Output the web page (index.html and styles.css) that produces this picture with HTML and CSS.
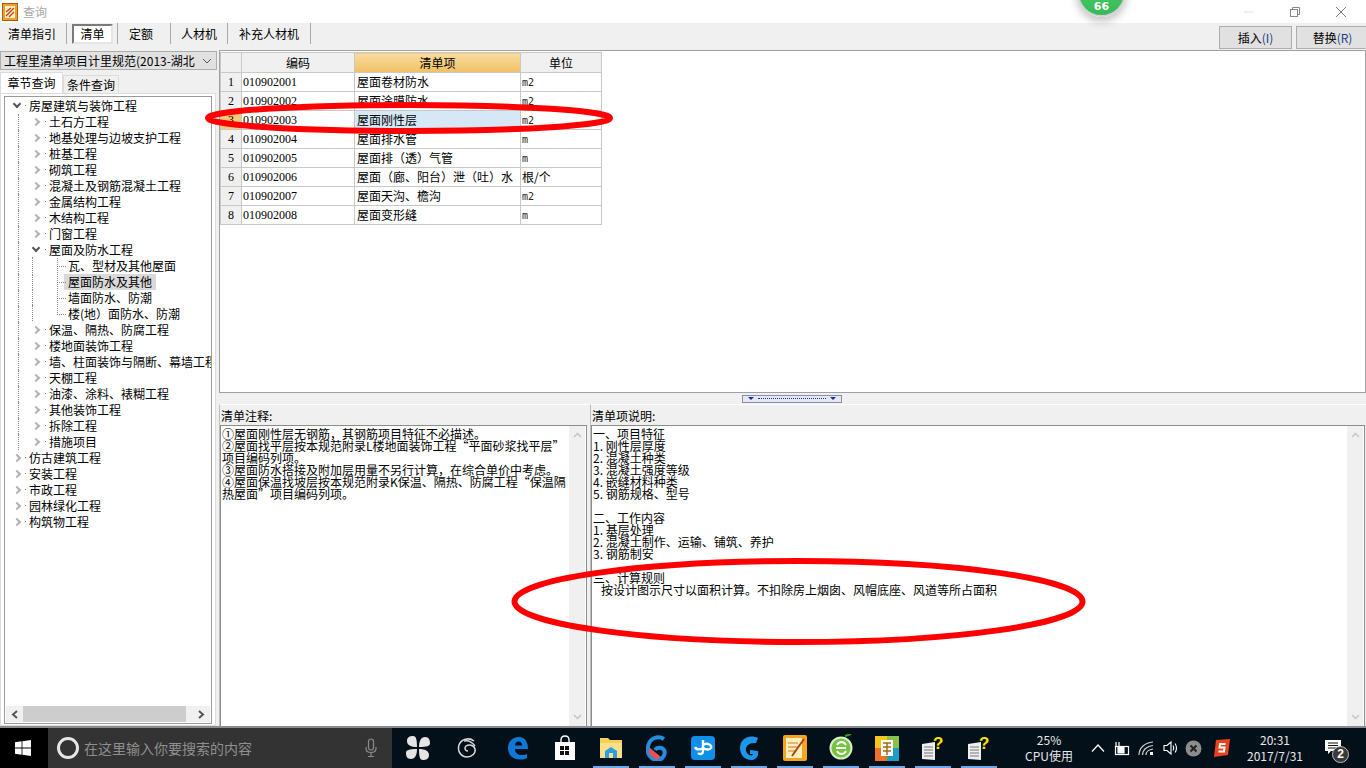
FILE: index.html
```html
<!DOCTYPE html>
<html lang="zh-CN">
<head>
    <meta charset="UTF-8">
    <title>查询</title>
    <link rel="stylesheet" href="styles.css">
</head>
<body>
    <div class="window">
        <div class="titlebar">
            <svg class="app-icon" width="16" height="18" viewBox="0 0 16 18">
                <rect x="0.5" y="0.5" width="15" height="17" fill="#f0a020" stroke="#b05a10"/>
                <rect x="3" y="3" width="10" height="12" fill="#fff3cf"/>
                <path d="M4 13 L12 5 M4 9 L9 5 M7 14 L12 9" stroke="#c8400f" stroke-width="1.4"/>
            </svg>
            <span class="title-text">查询</span>
            <div class="win-controls">
                <svg width="12" height="12" viewBox="0 0 12 12"><path d="M1 6H11" stroke="#e2e2e2"/></svg>
                <svg width="12" height="12" viewBox="0 0 12 12" fill="none" stroke="#888"><rect x="1.5" y="3.5" width="7" height="7"/><path d="M3.5 3.5V1.5H10.5V8.5H8.5"/></svg>
                <svg width="12" height="12" viewBox="0 0 12 12" fill="none" stroke="#777"><path d="M1 1L11 11M11 1L1 11"/></svg>
            </div>
        </div>

        <div class="toolbar">
            <div class="tabs">
                <div class="tab tab-guide">清单指引</div>
                <div class="tab tab-pressed"><span>清单</span></div>
                <div class="tab tab-quota">定额</div>
                <div class="tab tab-res">人材机</div>
                <div class="tab tab-extra">补充人材机</div>
            </div>
            <div class="actions">
                <button class="action">插入<em>(I)</em></button>
                <button class="action">替换<em>(R)</em></button>
            </div>
        </div>

        <div class="main">
            <div class="left-panel">
                <div class="select-box">
                    <span class="select-text">工程里清单项目计里规范(2013-湖北</span>
                    <svg width="10" height="6" viewBox="0 0 10 6" fill="none" stroke="#555"><path d="M1 1L5 5L9 1"/></svg>
                </div>
                <div class="sub-tabs">
                    <div class="sub-tab active">章节查询</div>
                    <div class="sub-tab">条件查询</div>
                </div>
                <div class="tree-box">
                    <div class="tree-frame">
                        <div class="tree">
                            <div class="row lv0 open"><i class="arrow"></i><span>房屋建筑与装饰工程</span></div>
                            <div class="row lv1"><i class="arrow"></i><span>土石方工程</span></div>
                            <div class="row lv1"><i class="arrow"></i><span>地基处理与边坡支护工程</span></div>
                            <div class="row lv1"><i class="arrow"></i><span>桩基工程</span></div>
                            <div class="row lv1"><i class="arrow"></i><span>砌筑工程</span></div>
                            <div class="row lv1"><i class="arrow"></i><span>混凝土及钢筋混凝土工程</span></div>
                            <div class="row lv1"><i class="arrow"></i><span>金属结构工程</span></div>
                            <div class="row lv1"><i class="arrow"></i><span>木结构工程</span></div>
                            <div class="row lv1"><i class="arrow"></i><span>门窗工程</span></div>
                            <div class="row lv1 open"><i class="arrow"></i><span>屋面及防水工程</span></div>
                            <div class="row lv2"><span>瓦、型材及其他屋面</span></div>
                            <div class="row lv2 selected"><span>屋面防水及其他</span></div>
                            <div class="row lv2"><span>墙面防水、防潮</span></div>
                            <div class="row lv2 last"><span>楼(地）面防水、防潮</span></div>
                            <div class="row lv1"><i class="arrow"></i><span>保温、隔热、防腐工程</span></div>
                            <div class="row lv1"><i class="arrow"></i><span>楼地面装饰工程</span></div>
                            <div class="row lv1"><i class="arrow"></i><span>墙、柱面装饰与隔断、幕墙工程</span></div>
                            <div class="row lv1"><i class="arrow"></i><span>天棚工程</span></div>
                            <div class="row lv1"><i class="arrow"></i><span>油漆、涂料、裱糊工程</span></div>
                            <div class="row lv1"><i class="arrow"></i><span>其他装饰工程</span></div>
                            <div class="row lv1"><i class="arrow"></i><span>拆除工程</span></div>
                            <div class="row lv1"><i class="arrow"></i><span>措施项目</span></div>
                            <div class="row lv0"><i class="arrow"></i><span>仿古建筑工程</span></div>
                            <div class="row lv0"><i class="arrow"></i><span>安装工程</span></div>
                            <div class="row lv0"><i class="arrow"></i><span>市政工程</span></div>
                            <div class="row lv0"><i class="arrow"></i><span>园林绿化工程</span></div>
                            <div class="row lv0"><i class="arrow"></i><span>构筑物工程</span></div>
                        </div>
                        <div class="hscroll">
                            <div class="hbtn"><svg width="7" height="9" viewBox="0 0 7 9" fill="none" stroke="#555" stroke-width="2"><path d="M6 1L2 4.500L6 8"/></svg></div>
                            <div class="hthumb"></div>
                            <div class="hbtn"><svg width="7" height="9" viewBox="0 0 7 9" fill="none" stroke="#555" stroke-width="2"><path d="M1 1L5 4.500L1 8"/></svg></div>
                        </div>
                    </div>
                </div>
            </div>

            <div class="right-panel">
                <div class="grid-box">
                    <table class="grid">
                        <colgroup><col class="c-no"><col class="c-code"><col class="c-name"><col class="c-unit"></colgroup>
                        <thead>
                            <tr><th></th><th>编码</th><th class="sorted">清单项</th><th>单位</th></tr>
                        </thead>
                        <tbody>
                            <tr><td class="no">1</td><td class="code">010902001</td><td>屋面卷材防水</td><td class="unit">m2</td></tr>
                            <tr><td class="no">2</td><td class="code">010902002</td><td>屋面涂膜防水</td><td class="unit">m2</td></tr>
                            <tr class="current"><td class="no">3</td><td class="code">010902003</td><td class="cell-on">屋面刚性层</td><td class="unit">m2</td></tr>
                            <tr><td class="no">4</td><td class="code">010902004</td><td>屋面排水管</td><td class="unit">m</td></tr>
                            <tr><td class="no">5</td><td class="code">010902005</td><td>屋面排（透）气管</td><td class="unit">m</td></tr>
                            <tr><td class="no">6</td><td class="code">010902006</td><td>屋面（廊、阳台）泄（吐）水</td><td class="unit-cn">根/个</td></tr>
                            <tr><td class="no">7</td><td class="code">010902007</td><td>屋面天沟、檐沟</td><td class="unit">m2</td></tr>
                            <tr><td class="no">8</td><td class="code">010902008</td><td>屋面变形缝</td><td class="unit">m</td></tr>
                        </tbody>
                    </table>
                </div>
                <div class="splitter">
                    <div class="split-handle">
                        <i class="tri"></i><b></b><i class="tri"></i>
                    </div>
                </div>
                <div class="bottom">
                    <div class="pane pane-notes">
                        <div class="pane-label">清单注释:</div>
                        <div class="text-box">
                            <div class="text-body">①屋面刚性层无钢筋，其钢筋项目特征不必描述。<br>②屋面找平层按本规范附录L楼地面装饰工程“平面砂浆找平层”<br>项目编码列项。<br>③屋面防水搭接及附加层用量不另行计算，在综合单价中考虑。<br>④屋面保温找坡层按本规范附录K保温、隔热、防腐工程“保温隔<br>热屋面”项目编码列项。</div>
                            <div class="vscroll">
                                <svg width="9" height="6" viewBox="0 0 9 6" fill="none" stroke="#c4c4c4" stroke-width="1.500"><path d="M1 5L4.500 1.500L8 5"/></svg>
                                <svg width="9" height="6" viewBox="0 0 9 6" fill="none" stroke="#c4c4c4" stroke-width="1.500"><path d="M1 1L4.500 4.500L8 1"/></svg>
                            </div>
                        </div>
                    </div>
                    <div class="pane pane-desc">
                        <div class="pane-label">清单项说明:</div>
                        <div class="text-box">
                            <div class="text-body">一、项目特征<br>1. 刚性层厚度<br>2. 混凝土种类<br>3. 混凝土强度等级<br>4. 嵌缝材料种类<br>5. 钢筋规格、型号<br><br>二、工作内容<br>1. 基层处理<br>2. 混凝土制作、运输、铺筑、养护<br>3. 钢筋制安<br><br>三、计算规则<br><span class="indent">按设计图示尺寸以面积计算。不扣除房上烟囱、风帽底座、风道等所占面积</span></div>
                            <div class="vscroll">
                                <svg width="9" height="6" viewBox="0 0 9 6" fill="none" stroke="#c4c4c4" stroke-width="1.500"><path d="M1 5L4.500 1.500L8 5"/></svg>
                                <svg width="9" height="6" viewBox="0 0 9 6" fill="none" stroke="#c4c4c4" stroke-width="1.500"><path d="M1 1L4.500 4.500L8 1"/></svg>
                            </div>
                        </div>
                    </div>
                </div>
            </div>
        </div>
    </div>

    <div class="taskbar">
        <div class="start">
            <svg width="16" height="16" viewBox="0 0 16 16" fill="#fff"><path d="M0 2.300L6.600 1.300V7.600H0ZM7.400 1.200L16 0V7.600H7.400ZM0 8.400H6.600V14.700L0 13.700ZM7.400 8.400H16V16L7.400 14.800Z"/></svg>
        </div>
        <div class="search">
            <span class="cortana"></span>
            <span class="search-text">在这里输入你要搜索的内容</span>
            <svg width="12" height="20" viewBox="0 0 12 20" fill="none" stroke="#8a8a8a" stroke-width="1.200"><rect x="3.500" y="1" width="5" height="11" rx="2.500"/><path d="M1 9V10.500C1 13 3 14.500 6 14.500S11 13 11 10.500V9M6 14.500V18M3 18.500H9"/></svg>
        </div>
        <div class="task-icons">
            <div class="task"><svg width="24" height="24" viewBox="0 0 24 24" fill="#e4e4e4"><path d="M11 11C5 11 1 9 1 5S4 0 7 0C10 0 11 3 11 11ZM13 11C13 5 15 1 19 1S24 4 24 7C24 10 21 11 13 11ZM13 13C19 13 23 15 23 19S20 24 17 24C14 24 13 21 13 13ZM11 13C11 19 9 23 5 23S0 20 0 17C0 14 3 13 11 13Z"/></svg></div>
            <div class="task task-second"><svg width="22" height="22" viewBox="0 0 22 22" fill="none" stroke="#d8d8d8" stroke-width="1.500"><path d="M18 4C13 0 5 2 3 8C1 14 5 20 11 20C16 20 20 16 19 12C18 8 13 7 10 9C8 11 9 14 12 14"/><path d="M8 4C12 3 16 5 19 9"/></svg></div>
            <div class="task task-third"><svg width="22" height="24" viewBox="0 0 22 24"><path d="M1 12C1 5 6 1 12 1C18 1 21 6 21 13H8C8 17 11 19 15 19C17 19 19 18.500 20 18V22C18 23 16 23.500 13 23.500C6 23.500 1 19 1 12ZM8 9.500H15C15 7 14 5.500 11.500 5.500C9.500 5.500 8 7 8 9.500Z" fill="#0f78d4"/></svg></div>
            <div class="task task-fourth"><svg width="20" height="26" viewBox="0 0 20 26"><path d="M6 7V5C6 2 8 1 10 1S14 2 14 5V7" fill="none" stroke="#fff" stroke-width="1.400"/><path d="M0 7H20V25H0Z" fill="#fff"/><path d="M5 11H9V15H5ZM10 11H14V15H10ZM5 16H9V20H5ZM10 16H14V20H10Z" fill="#111"/></svg></div>
            <div class="task on"><svg width="22" height="22" viewBox="0 0 22 22"><path d="M0 1H8L10 3H22V21H0Z" fill="#f6cf5b"/><path d="M0 6H22V21H0Z" fill="#fbe08a"/><path d="M5 21V14L11 10L17 14V21H13V16H9V21Z" fill="#2b9fe0"/></svg></div>
            <div class="task on"><svg width="22" height="26" viewBox="0 0 22 26"><path d="M18 4C12 0 4 3 2 11C0 18 5 25 11 25C17 25 20 19 18 15C16 12 11 12 9 15" fill="none" stroke="#1f8fe0" stroke-width="4"/><path d="M3 12L15 22L10 25L3 19Z" fill="#e8505b"/></svg></div>
            <div class="task on"><svg width="24" height="24" viewBox="0 0 24 24"><rect width="24" height="24" rx="4" fill="#0f8fe8"/><path d="M12 4V15C12 18 9 19 7 17M12 9C16 6 21 9 20 12C19 14 15 14 12 12M12 12C9 14 5 14 4 11" fill="none" stroke="#fff" stroke-width="2.400"/></svg></div>
            <div class="task on"><svg width="22" height="26" viewBox="0 0 22 26"><path d="M20 3C12 -1 2 3 2 13C2 20 7 25 13 25C18 25 21 21 20 16L12 15V19H15C15 21 11 21 9 18C6 14 9 7 18 8Z" fill="#1c95ea"/></svg></div>
            <div class="task on"><svg width="24" height="28" viewBox="0 0 24 28"><rect y="1" width="24" height="26" rx="2" fill="#f4a41e"/><rect x="3" y="4" width="16" height="20" fill="#fdeec0"/><path d="M5 9H15M5 13H15M5 17H12" stroke="#c77a1f"/><path d="M9 22L21 5" stroke="#b13f10" stroke-width="2"/></svg></div>
            <div class="task on"><svg width="24" height="28" viewBox="0 0 24 28"><circle cx="12" cy="14" r="10.500" fill="#76c442" stroke="#d8efc8" stroke-width="2"/><path d="M7 14H17M8 11C10 7 15 7 17 11M8 17C10 21 15 21 17 17" fill="none" stroke="#fff" stroke-width="1.800"/><path d="M16 2L22 0" stroke="#3f9a20" stroke-width="2"/></svg></div>
            <div class="task on"><svg width="24" height="28" viewBox="0 0 24 28"><path d="M0 2H12V14H0Z" fill="#f5c61e"/><path d="M12 2H24V14H12Z" fill="#8bc34a"/><path d="M0 14H12V27H0Z" fill="#f0702a"/><path d="M12 14H24V27H12Z" fill="#1a9fc4"/><path d="M6 6H18V22H6Z" fill="#fff"/><path d="M8 9H16M8 13H16M8 17H16M12 9V21" stroke="#a86a10" stroke-width="1.500"/></svg></div>
            <div class="task on"><svg width="22" height="26" viewBox="0 0 22 26"><path d="M0 9L13 7V25L0 24Z" fill="#eee"/><path d="M2 12H11M2 15H11M2 18H11M2 21H11" stroke="#777"/><text class="qmark" x="11" y="14">?</text></svg></div>
            <div class="task on"><svg width="22" height="26" viewBox="0 0 22 26"><path d="M0 9L13 7V25L0 24Z" fill="#eee"/><path d="M2 12H11M2 15H11M2 18H11M2 21H11" stroke="#777"/><text class="qmark" x="11" y="14">?</text></svg></div>
        </div>
        <div class="cpu"><span>25%</span><span>CPU使用</span></div>
        <div class="tray">
            <svg width="14" height="8" viewBox="0 0 14 8" fill="none" stroke="#fff" stroke-width="1.200"><path d="M1 7.500L7 1L13 7.500"/></svg>
            <svg width="17" height="15" viewBox="0 0 17 15" fill="none" stroke="#fff" stroke-width="1.200"><rect x="2.500" y="5.500" width="13" height="8"/><path d="M5 6V12H11V6" fill="#fff"/><path d="M3 1V5M6 1V5"/></svg>
            <svg width="17" height="15" viewBox="0 0 17 15" fill="none" stroke="#cfcfcf" stroke-width="1.200"><path d="M1 14C1 7 7 1.500 15 1M4.500 14C4.500 9 9 5 15 4.500M8 14C8 11 11 8.500 15 8"/><rect x="12" y="11" width="3" height="3" fill="#fff" stroke="none"/></svg>
            <svg width="16" height="16" viewBox="0 0 16 16" fill="none" stroke="#fff" stroke-width="1.100"><path d="M1 5.500H4L8 2V14L4 10.500H1Z"/><path d="M10 5.500C11 7 11 9 10 10.500M12 3.500C14 6 14 10 12 12.500"/></svg>
            <svg class="tray-off" width="17" height="17" viewBox="0 0 17 17"><circle cx="8.500" cy="8.500" r="8" fill="#8c8c8c"/><path d="M5.500 5.500L11.500 11.500M11.500 5.500L5.500 11.500" stroke="#222" stroke-width="2"/></svg>
            <svg class="sogou" width="16" height="18" viewBox="0 0 16 18"><path d="M2 1L16 0L14 16L0 18Z" fill="#e8431f"/><path d="M11.500 5H6L5.500 8.500H10.500L10 12.500H4.500" fill="none" stroke="#fff" stroke-width="2"/></svg>
        </div>
        <div class="clock"><span>20:31</span><span>2017/7/31</span></div>
        <div class="notify">
            <svg width="16" height="14" viewBox="0 0 16 14"><path d="M0 0H16V11H6L3 14V11H0Z" fill="#fff"/><path d="M3 3H13M3 5.500H13M3 8H13" stroke="#111"/></svg>
            <span class="notify-count">2</span>
        </div>
    </div>

    <!-- 红圈标注和悬浮球都盖在窗口上面 -->
    <div class="float-ball"><span>66</span></div>
    <svg class="marks" width="1366" height="768" viewBox="0 0 1366 768" fill="none" stroke="#ff0000">
        <ellipse cx="409" cy="118" rx="201" ry="13" stroke-width="6"/>
        <ellipse cx="798.500" cy="601.500" rx="284" ry="40.500" stroke-width="6"/>
    </svg>
</body>
</html>
```

FILE: styles.css
```css
* {
    box-sizing: border-box;
}
html, body {
    margin: 0;
    padding: 0;
    height: 100%;
    overflow: hidden;
}
body {
    position: relative;
    width: 1366px;
    height: 768px;
    display: flex;
    flex-direction: column;
    font-family: "Noto Sans CJK SC", "Liberation Sans", sans-serif;
    font-size: 12px;
    color: #000;
    background: #f0f0f0;
}
.window {
    height: 728px;
    display: flex;
    flex-direction: column;
    border-bottom: 2px solid #8c8c8c;
}

/* title bar */
.titlebar {
    height: 23px;
    flex: none;
    background: #fff;
    display: flex;
    align-items: center;
    padding-left: 2px;
}
.app-icon {
    margin-right: 5px;
}
.title-text {
    color: #a8a8a8;
    font-size: 12px;
}
.win-controls {
    margin-left: auto;
    display: flex;
    gap: 34px;
    padding-right: 19px;
    align-items: center;
}

/* toolbar */
.toolbar {
    height: 27px;
    flex: none;
    display: flex;
    justify-content: space-between;
    background: #f0f0f0;
}
.tabs {
    display: flex;
    height: 27px;
}
.tab {
    display: flex;
    align-items: center;
    font-size: 12px;
    border-right: 1px solid #a8a8a8;
    height: 21px;
}
.tab-guide {
    padding: 0 10px 0 8px;
}
.tab-pressed {
    padding: 0 4px 0 5px;
}
.tab-quota {
    padding: 0 17px 0 11px;
}
.tab-res {
    padding: 0 10px;
}
.tab-extra {
    padding: 0 11px;
}
.tab-pressed span {
    display: block;
    width: 41px;
    height: 20px;
    line-height: 16px;
    text-align: center;
    background: #fff;
    border: 2px solid;
    border-color: #7a7a7a #e6e6e6 #e6e6e6 #7a7a7a;
}
.actions {
    display: flex;
    gap: 4px;
    padding-top: 3px;
    margin-right: -3px;
}
.action {
    width: 73px;
    height: 23px;
    padding: 0;
    font: 12px "Noto Sans CJK SC", sans-serif;
    color: #000;
    background: #e1e1e1;
    border: 1px solid #adadad;
}
.action em {
    font-style: normal;
    color: #1f3f80;
}

/* main area */
.main {
    flex: 1;
    display: flex;
    min-height: 0;
}
.left-panel {
    width: 219px;
    flex: none;
    display: flex;
    flex-direction: column;
}
.select-box {
    margin: 1px 2px 0 0;
    height: 19px;
    flex: none;
    background: #e1e1e1;
    border: 1px solid #adadad;
    display: flex;
    align-items: center;
    justify-content: space-between;
    padding: 0 4px 0 3px;
    overflow: hidden;
    white-space: nowrap;
}
.select-text {
    width: 198px;
    overflow: hidden;
}
.sub-tabs {
    display: flex;
    flex: none;
    height: 23px;
    padding-top: 2px;
}
.sub-tab {
    height: 18px;
    margin-top: 3px;
    width: 56px;
    text-align: center;
    line-height: 18px;
    background: #f0f0f0;
    border: 1px solid #dcdcdc;
    border-bottom: none;
}
.sub-tab.active {
    width: 63px;
    margin-top: 0;
    height: 21px;
    line-height: 20px;
    background: #fff;
}
.tree-box {
    flex: 1;
    min-height: 0;
    margin-right: 3px;
    background: #fff;
    border: 1px solid #dcdcdc;
    padding: 2px 3px 1px;
}
.tree-frame {
    height: 100%;
    border: 1px solid #9a9a9a;
    display: flex;
    flex-direction: column;
    padding-bottom: 1px;
}
.tree {
    flex: 1;
    min-height: 0;
    overflow: hidden;
    padding-top: 1px;
}
.row {
    height: 16px;
    line-height: 16px;
    position: relative;
    white-space: nowrap;
}
.row span {
    position: relative;
}
.lv0 {
    padding-left: 24px;
}
.lv1 {
    padding-left: 44px;
}
.lv2 {
    padding-left: 63px;
}
.selected span {
    display: inline-block;
    height: 16px;
    margin-left: -4px;
    padding: 0 4px;
    background: #d9d9d9;
}

/* disclosure arrows and dotted guides */
.arrow {
    position: absolute;
    top: 5px;
    width: 6px;
    height: 6px;
    border: solid #b4b4b4;
    border-width: 2px 2px 0 0;
    transform: rotate(45deg);
}
.lv0 .arrow {
    left: 9px;
}
.lv1 .arrow {
    left: 28px;
}
.open .arrow {
    top: 3px;
    border-color: #555;
    transform: rotate(135deg);
}
.lv0 span::before,
.lv1 span::before {
    content: "";
    position: absolute;
    left: -4px;
    top: 8px;
    width: 1px;
    height: 1px;
    background: #777;
}
.lv1::before,
.lv2::before {
    content: "";
    position: absolute;
    left: 13px;
    top: 0;
    bottom: 0;
    border-left: 1px dotted #888;
}
.lv2 span::before {
    content: "";
    position: absolute;
    left: -36px;
    top: 0;
    height: 16px;
    border-left: 1px dotted #888;
}
.selected span::before {
    left: -32px;
}
.lv2::after {
    content: "";
    position: absolute;
    left: 52px;
    top: 0;
    width: 10px;
    height: 100%;
    background:
        linear-gradient(to right, #888 50%, transparent 50%) 0 8px / 2px 1px repeat-x,
        linear-gradient(#888 50%, transparent 50%) 0 0 / 1px 2px repeat-y;
}
.lv2.last::after {
    height: 9px;
}
.hscroll {
    flex: none;
    height: 16px;
    margin: 0 1px;
    display: flex;
    background: #f0f0f0;
}
.hbtn {
    width: 17px;
    flex: none;
    display: flex;
    align-items: center;
    justify-content: center;
}
.hthumb {
    width: 163px;
    margin-right: auto;
    background: #cdcdcd;
}

/* list grid */
.right-panel {
    flex: 1;
    min-width: 0;
    display: flex;
    flex-direction: column;
}
.grid-box {
    height: 343px;
    flex: none;
    background: #fff;
    border: 1px solid #a0a0a0;
    padding-top: 1px;
}
.grid {
    width: 381px;
    table-layout: fixed;
    border-collapse: collapse;
}
.c-no {
    width: 21px;
}
.c-code {
    width: 113px;
}
.c-name {
    width: 166px;
}
.c-unit {
    width: 81px;
}
.grid th {
    height: 20px;
    font-weight: normal;
    background: #f0f0f0;
    border: 1px solid #c8c8c8;
    padding: 0 0 1px;
}
.grid th.sorted {
    background: linear-gradient(#f8dca0, #f2c063);
}
.grid td {
    height: 19px;
    border: 1px solid #c8c8c8;
    padding: 0 2px 1px;
    white-space: nowrap;
    overflow: hidden;
}
.grid td.no {
    background: #f0f0f0;
    text-align: center;
    padding: 0;
    font-family: "Liberation Serif", serif;
}
.grid td.code {
    padding: 0 0 0 1px;
    font-family: "Liberation Serif", serif;
}
.grid td.unit {
    padding: 0 0 0 1px;
    font-family: "DejaVu Sans Mono", monospace;
    font-size: 10px;
    color: #222;
}
.grid td.unit-cn {
    padding-left: 1px;
}
.current td.no {
    background: #f8c878;
}
.cell-on {
    background: #d6e8f6;
}

/* splitter */
.splitter {
    height: 11px;
    flex: none;
    display: flex;
    justify-content: center;
    align-items: center;
    padding-right: 1px;
}
.split-handle {
    width: 100px;
    height: 8px;
    background: #e4e8f4;
    border: 1px solid #8a8fa8;
    display: flex;
    align-items: center;
    justify-content: space-between;
    padding: 0 5px;
}
.split-handle b {
    flex: 1;
    margin: 0 4px;
    border-top: 1px dotted #1f2f90;
}
.tri {
    width: 0;
    height: 0;
    border: solid transparent;
    border-width: 3px 3px 0;
    border-top-color: #1f2f90;
}

/* notes */
.bottom {
    flex: 1;
    min-height: 0;
    display: flex;
    gap: 2px;
}
.pane {
    display: flex;
    flex-direction: column;
    border-left: 1px solid #bdbdbd;
    border-top: 1px solid #fff;
}
.pane-notes {
    width: 369px;
}
.pane-desc {
    flex: 1;
    min-width: 0;
}
.pane-label {
    height: 20px;
    padding: 3px 0 0 1px;
    line-height: 16px;
    flex: none;
}
.text-box {
    flex: 1;
    min-height: 0;
    display: flex;
    background: #fff;
    border: 1px solid #8c8c8c;
    border-bottom: none;
    margin-right: 1px;
}
.text-body {
    flex: 1;
    min-width: 0;
    padding: 2px 0 0 1px;
    line-height: 12px;
    white-space: nowrap;
    overflow: hidden;
}
.indent {
    padding-left: 8px;
}
.vscroll {
    width: 16px;
    flex: none;
    margin-right: 1px;
    background: #f0f0f0;
    display: flex;
    flex-direction: column;
    justify-content: space-between;
    align-items: center;
    padding: 6px 0;
}

/* taskbar */
.taskbar {
    flex: 1;
    display: flex;
    align-items: center;
    background: #03101a;
    color: #fff;
}
.start {
    width: 48px;
    flex: none;
    align-self: stretch;
    background: #000;
    display: flex;
    align-items: center;
    justify-content: center;
    padding-right: 2px;
}
.search {
    width: 344px;
    flex: none;
    align-self: stretch;
    background: #333;
    display: flex;
    align-items: center;
    padding: 0 15px 0 9px;
}
.cortana {
    width: 22px;
    height: 22px;
    border-radius: 50%;
    border: 3px solid #e6e6e6;
    flex: none;
}
.search-text {
    margin-left: 5px;
    font-size: 14px;
    color: #8f8f8f;
    flex: 1;
}
.task-icons {
    display: flex;
    flex: none;
    margin-left: 3px;
    align-self: stretch;
}
.task {
    width: 46px;
    display: flex;
    align-items: center;
    justify-content: center;
    position: relative;
}
.task-second {
    margin-left: 3px;
}
.task-third {
    margin-left: 5px;
}
.task-fourth {
    margin-left: 1px;
}
.task.on::after {
    content: "";
    position: absolute;
    left: 5px;
    right: 5px;
    bottom: 0;
    height: 2px;
    background: #6aa9e8;
}
.qmark {
    font: bold 17px "Liberation Sans", sans-serif;
    fill: #ffe000;
}
.cpu {
    width: 68px;
    flex: none;
    margin-left: 13px;
    display: flex;
    flex-direction: column;
    align-items: center;
    font-size: 12px;
    line-height: 16px;
    color: #e8e8e8;
}
.tray {
    display: flex;
    align-items: center;
    gap: 8px;
    margin-left: 8px;
    flex: none;
}
.tray-off {
    margin-left: -2px;
}
.sogou {
    margin-left: 4px;
}
.clock {
    width: 66px;
    flex: none;
    margin-left: 12px;
    display: flex;
    flex-direction: column;
    align-items: center;
    line-height: 16px;
    font-size: 12px;
    color: #e8e8e8;
}
.notify {
    position: relative;
    margin-left: 17px;
    width: 24px;
    height: 24px;
    padding-top: 4px;
}
.notify svg {
    display: block;
}
.notify-count {
    position: absolute;
    left: 7px;
    top: 10px;
    width: 17px;
    height: 17px;
    border-radius: 50%;
    background: #3a3a3a;
    border: 1px solid #bbb;
    text-align: center;
    font: bold 12px/15px "Liberation Sans", sans-serif;
}

/* floating ball and red marks */
.float-ball {
    position: absolute;
    left: 1077px;
    top: -32px;
    width: 49px;
    height: 49px;
    border-radius: 50%;
    background: linear-gradient(#58d46c, #35b957);
    border: 2px solid #d0d0d0;
    box-shadow: 0 4px 8px rgba(0, 0, 0, 0.25);
    display: flex;
    justify-content: center;
    align-items: flex-end;
}
.float-ball span {
    font: bold 11px/14px "DejaVu Sans", sans-serif;
    color: #fff;
    padding-bottom: 1px;
}
.marks {
    position: absolute;
    left: 0;
    top: 0;
    pointer-events: none;
}
```
